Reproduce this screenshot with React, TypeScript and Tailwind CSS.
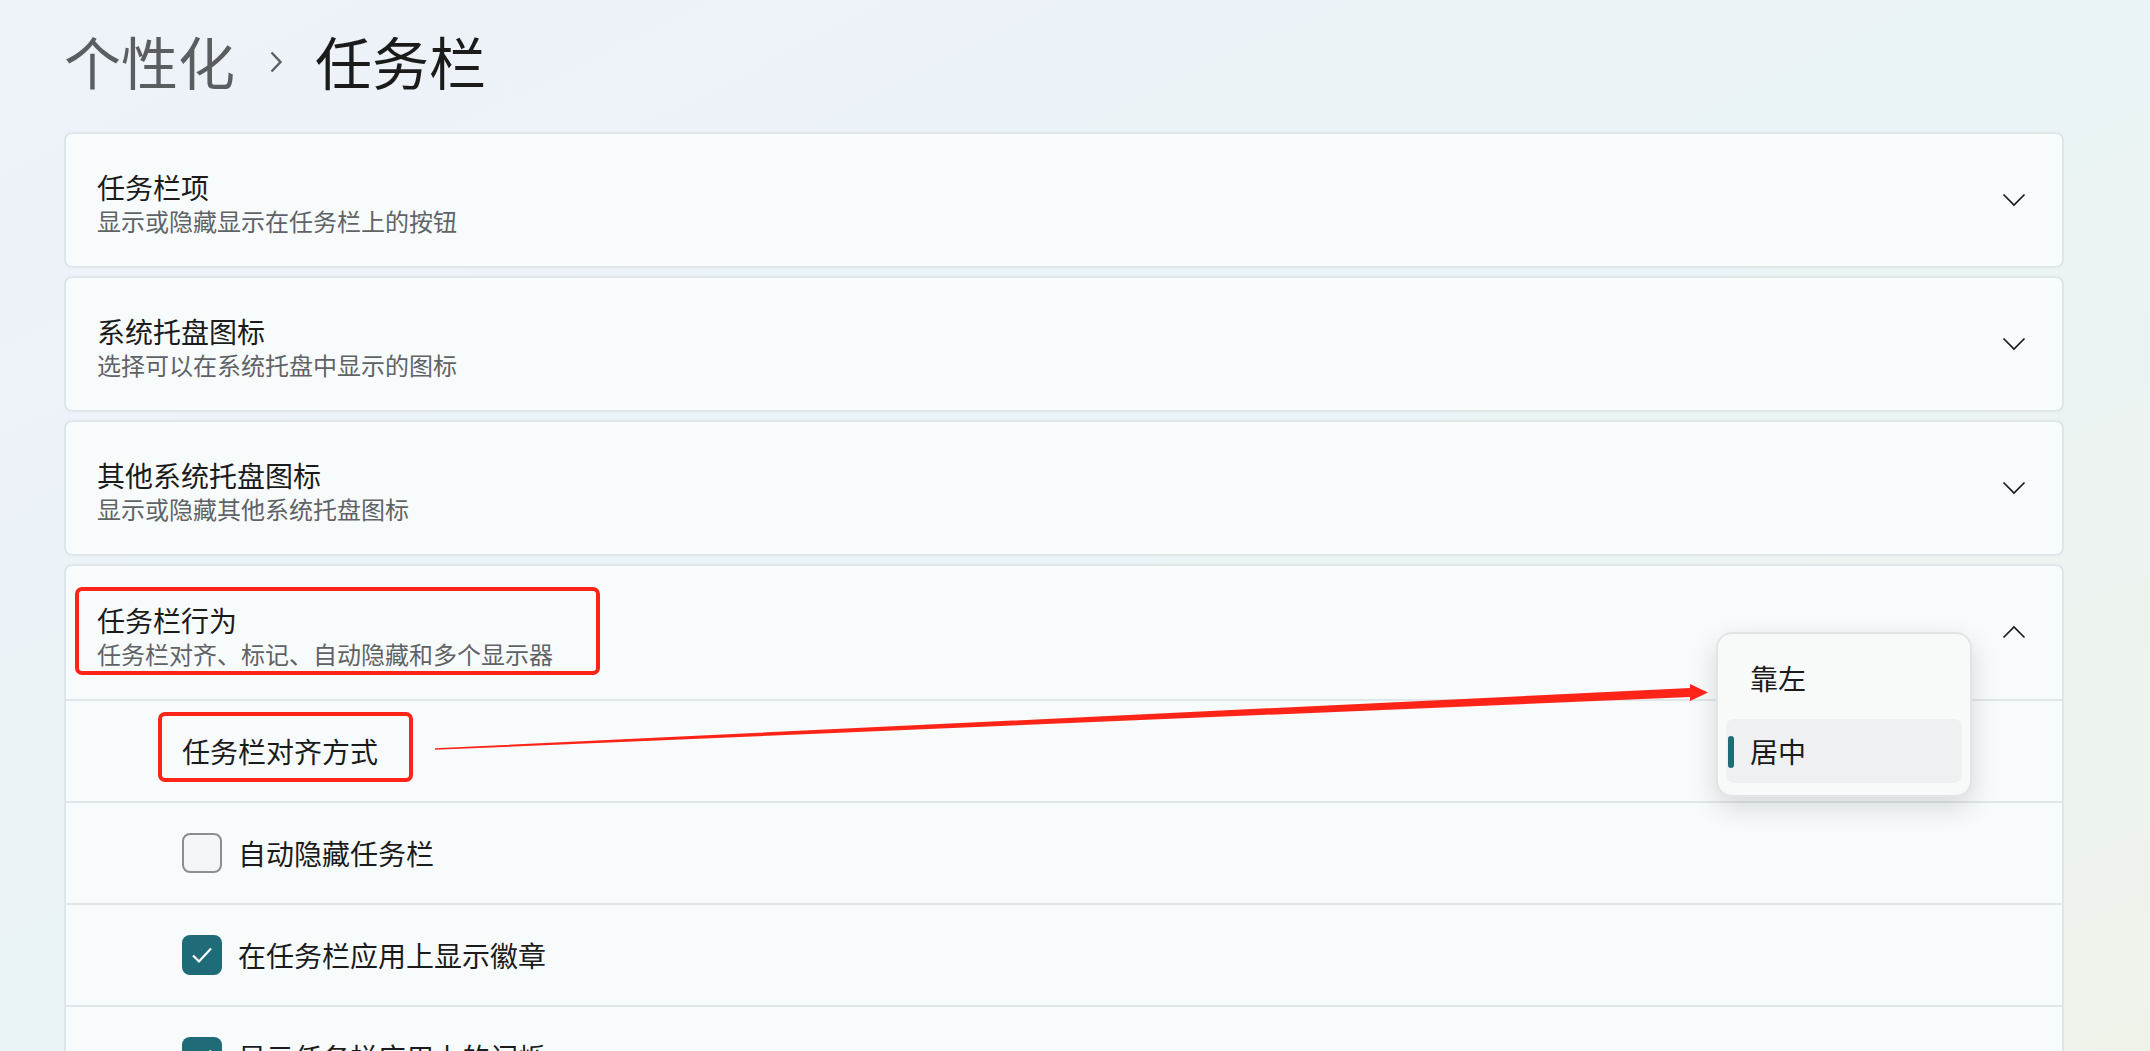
import React from "react";

function ChevronDown({ up = false }: { up?: boolean }) {
  return (
    <svg width="24" height="14" viewBox="0 0 24 14" fill="none" className={up ? "rotate-180" : ""}>
      <path d="M1.5 1.5 L12 12 L22.5 1.5" stroke="#1b1b1b" strokeWidth="1.7" strokeLinejoin="miter" />
    </svg>
  );
}

function Checkbox({ checked }: { checked: boolean }) {
  if (checked) {
    return (
      <div className="w-[40px] h-[40px] rounded-[8px] bg-[#1f6b78] flex items-center justify-center shrink-0">
        <svg width="22" height="18" viewBox="0 0 22 18" fill="none">
          <path d="M2 9.5 L8 15.5 L20 2.5" stroke="#ffffff" strokeWidth="2.2" />
        </svg>
      </div>
    );
  }
  return <div className="w-[40px] h-[40px] rounded-[8px] border-2 border-[#8b8d8f] bg-[#f3f5f6] shrink-0" />;
}

export default function App() {
  const cards = [
    { title: "任务栏项", details: "显示或隐藏显示在任务栏上的按钮" },
    { title: "系统托盘图标", details: "选择可以在系统托盘中显示的图标" },
    { title: "其他系统托盘图标", details: "显示或隐藏其他系统托盘图标" },
  ];

  const options = [
    { label: "自动隐藏任务栏", checked: false },
    { label: "在任务栏应用上显示徽章", checked: true },
    { label: "显示任务栏应用上的闪烁", checked: true },
  ];

  return (
    <div className="relative w-full h-[1051px] overflow-hidden bg-gradient-to-br from-[#eef2f9] via-[#eaf3f6] to-[#eef3ea] font-['Noto_Sans_CJK_SC',sans-serif] text-[#1b1b1b]">
      <div className="pl-[64px] w-[2064px]">
        {/* header */}
        <div className="h-[117px] flex items-center pt-[2px]">
          <span className="text-[57px] leading-[76px] text-[#5b5e61]">个性化</span>
          <svg width="14" height="22" viewBox="0 0 14 22" fill="none" className="mt-[4px] ml-[34px] mr-[32px]">
            <path d="M2.5 1.5 L11.5 11 L2.5 20.5" stroke="#5b5e61" strokeWidth="2.4" />
          </svg>
          <span className="text-[57px] leading-[76px] text-[#1b1b1b]">任务栏</span>
        </div>

        {/* collapsed sections */}
        <div className="mt-[15px] flex flex-col gap-[8px]">
          {cards.map((card, index) => (
            <div
              key={index}
              className="h-[136px] rounded-[8px] border-2 border-[#dfe6ea] bg-[#f8fbfc] flex items-center justify-between pl-[31px] pr-[36px]"
            >
              <div className="flex flex-col pt-[6px]">
                <span className="text-[28px] leading-[36px]">{card.title}</span>
                <span className="text-[24px] leading-[32px] text-[#606366]">{card.details}</span>
              </div>
              <ChevronDown />
            </div>
          ))}

          {/* expanded section */}
          <div className="relative rounded-t-[8px] border-2 border-b-0 border-[#dfe6ea] bg-[#f8fbfc] h-[500px]">
            <div className="relative h-[135px] flex items-center justify-between pl-[31px] pr-[36px] border-b-2 border-[#e0e7ea]">
              <div className="flex flex-col pt-[6px]">
                <span className="text-[28px] leading-[36px]">任务栏行为</span>
                <span className="text-[24px] leading-[32px] text-[#606366]">任务栏对齐、标记、自动隐藏和多个显示器</span>
              </div>
              <div className="mt-[-2px]">
                <ChevronDown up />
              </div>
              <div className="absolute left-[9px] top-[21px] w-[525px] h-[88px] border-[4px] border-[#ff2418] rounded-[7px]" />
            </div>

            <div className="relative h-[102px] flex items-center pl-[116px] border-b-2 border-[#e0e7ea]">
              <span className="text-[28px] leading-[36px]">任务栏对齐方式</span>
              <div className="absolute left-[92px] top-[11px] w-[255px] h-[70px] border-[4px] border-[#ff2418] rounded-[7px]" />
            </div>

            {options.map((opt, index) => (
              <div key={index} className="h-[102px] flex items-center gap-[16px] pl-[116px] border-b-2 border-[#e0e7ea]">
                <Checkbox checked={opt.checked} />
                <span className="text-[28px] leading-[36px]">{opt.label}</span>
              </div>
            ))}
          </div>
        </div>
      </div>

      {/* alignment dropdown */}
      <div className="absolute left-[1716px] top-[632px] w-[256px] h-[165px] rounded-[16px] border-2 border-[#e2e4e5] bg-[#f8f9f9] shadow-[0_10px_28px_rgba(0,0,0,0.14)] px-[8px] py-[12px] flex flex-col gap-[8px]">
        <div className="h-[65px] flex items-center pl-[24px] text-[28px] leading-[36px]">靠左</div>
        <div className="relative h-[65px] rounded-[8px] bg-[#eff0f1] flex items-center pl-[24px] text-[28px] leading-[36px]">
          <div className="absolute left-[2px] top-[17px] w-[6px] h-[32px] rounded-full bg-[#1f6b78]" />
          居中
        </div>
      </div>

      {/* annotation arrow */}
      <svg className="absolute left-0 top-0 pointer-events-none" width="2150" height="1051" viewBox="0 0 2150 1051">
        <polygon points="435,748.3 1690,688 1690,684 1708,692.5 1690,701 1690,697 435,749.8" fill="#ff2418" />
      </svg>
    </div>
  );
}
